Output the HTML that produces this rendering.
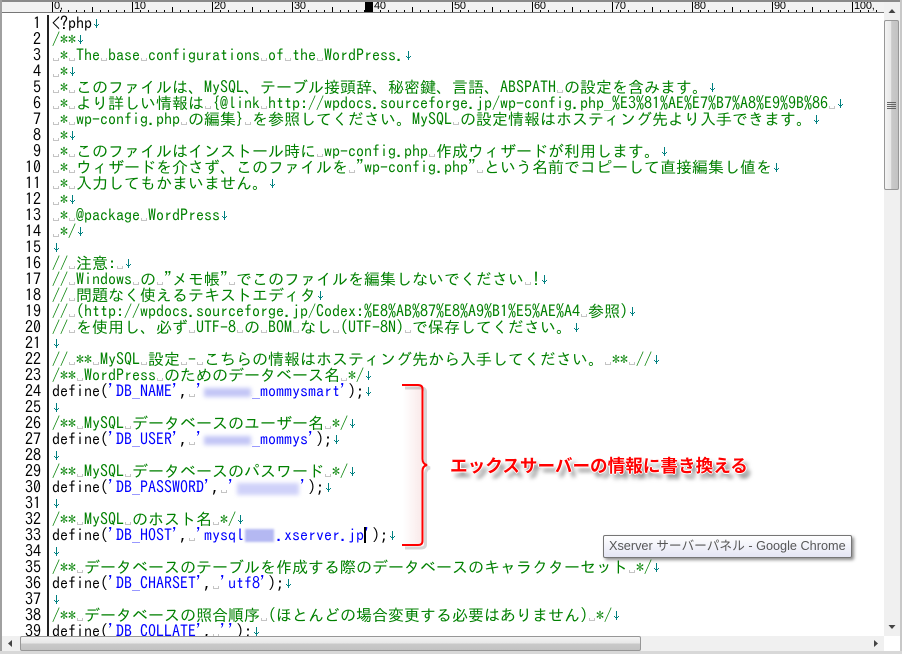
<!DOCTYPE html>
<html lang="ja"><head><meta charset="utf-8"><title>wp-config.php</title>
<style>
html,body{margin:0;padding:0;background:#fff}
#w{position:relative;width:902px;height:654px;overflow:hidden;background:#fff}
.l{position:absolute;left:52px;height:16px;line-height:16px;white-space:pre;font:16px/16px "IPAGothic","Noto Sans CJK JP",monospace;color:#000;-webkit-font-smoothing:none}
.n{position:absolute;left:0;width:41px;text-align:right;height:16px;font:16px/16px "IPAGothic",monospace;color:#000}
.g{color:#008000}
b{font-weight:normal;color:#0000ff}
s{display:inline-block;width:8px;height:16px;position:relative;text-decoration:none;vertical-align:top}
s:after{content:"";position:absolute;left:1px;top:11px;width:4px;height:2px;border:1px solid #c4c4c4;border-top:0}
u{display:inline-block;width:8px;height:16px;overflow:hidden;vertical-align:top;text-decoration:none;position:relative}
u:after{content:"";position:absolute;left:4px;top:4px;width:1px;height:9px;background:#008080}
u:before{content:"";position:absolute;left:2px;top:9px;width:5px;height:3px;background:linear-gradient(#008080,#008080) 0 0/1px 1px no-repeat,linear-gradient(#008080,#008080) 4px 0/1px 1px no-repeat,linear-gradient(#008080,#008080) 1px 1px/1px 1px no-repeat,linear-gradient(#008080,#008080) 3px 1px/1px 1px no-repeat}
.bl{position:absolute;background:#c3c6f6;filter:blur(2px)}
#gut{position:absolute;left:47px;top:15px;width:2px;height:621px;background:#222}
#top{position:absolute;left:0;top:0;width:902px;height:2px;background:#8a8a8a}
#left{position:absolute;left:0;top:0;width:2px;height:654px;background:#a0a0a0}
#rul{position:absolute;left:2px;top:2px;width:882px;height:10px;background:#f2f2f2}
#rl{position:absolute;left:0;top:12px;width:884px;height:1px;background:#777}
.rt{position:absolute;top:1px;font:11px/11px "Liberation Sans",sans-serif;color:#000;letter-spacing:-.2px}
#vs{position:absolute;left:884px;top:2px;width:16px;height:634px;background:#f0f0f0}
#th{position:absolute;left:884px;top:20px;width:15px;height:170px;box-sizing:border-box;border:1px solid #979797;border-radius:2px;background:linear-gradient(90deg,#f3f3f3,#e8e8e8 45%,#c9c9c9 50%,#c2c2c2)}
#hs{position:absolute;left:2px;top:636px;width:882px;height:15px;background:#f0f0f0}
#hth{position:absolute;left:20px;top:636px;width:621px;height:15px;box-sizing:border-box;border:1px solid #979797;border-radius:2px;background:linear-gradient(#f3f3f3,#e8e8e8 45%,#c9c9c9 55%,#c2c2c2)}
#bot{position:absolute;left:0;top:651px;width:902px;height:3px;background:#d8d8d8}
#rb{position:absolute;left:900px;top:0;width:2px;height:654px;background:#c8c8c8}
#tip{position:absolute;left:603px;top:535px;width:249px;height:23px;box-sizing:border-box;border:1px solid #767676;border-radius:2px;background:linear-gradient(#fff,#e4e5f4);box-shadow:2px 2px 3px rgba(0,0,0,.45);font:12.7px/21px "Liberation Sans","Noto Sans CJK JP",sans-serif;color:#575757;padding-left:5px;white-space:nowrap;z-index:5}
#note{position:absolute;left:450px;top:455px;font:bold 17.6px/22px "Noto Sans CJK JP",sans-serif;color:#f00;white-space:nowrap;text-shadow:-1px 0 0 #fff,1px 0 0 #fff,0 -1px 0 #fff,0 1px 0 #fff,4px 5px 4px rgba(0,0,0,.55)}
#caret{position:absolute;left:364px;top:527px;width:2px;height:16px;background:#000}
</style></head><body><div id="w">

<div class="n" style="top:15px">1</div><div class="l" style="top:15px">&lt;?php<u></u></div>
<div class="n" style="top:31px">2</div><div class="l g" style="top:31px">/**<u></u></div>
<div class="n" style="top:47px">3</div><div class="l g" style="top:47px"><s></s>*<s></s>The<s></s>base<s></s>configurations<s></s>of<s></s>the<s></s>WordPress.<u></u></div>
<div class="n" style="top:63px">4</div><div class="l g" style="top:63px"><s></s>*<u></u></div>
<div class="n" style="top:79px">5</div><div class="l g" style="top:79px"><s></s>*<s></s>このファイルは、MySQL、テーブル接頭辞、秘密鍵、言語、ABSPATH<s></s>の設定を含みます。<u></u></div>
<div class="n" style="top:95px">6</div><div class="l g" style="top:95px"><s></s>*<s></s>より詳しい情報は<s></s>{@link<s></s>http://wpdocs.sourceforge.jp/wp-config.php_%E3%81%AE%E7%B7%A8%E9%9B%86<s></s><u></u></div>
<div class="n" style="top:111px">7</div><div class="l g" style="top:111px"><s></s>*<s></s>wp-config.php<s></s>の編集}<s></s>を参照してください。MySQL<s></s>の設定情報はホスティング先より入手できます。<u></u></div>
<div class="n" style="top:127px">8</div><div class="l g" style="top:127px"><s></s>*<u></u></div>
<div class="n" style="top:143px">9</div><div class="l g" style="top:143px"><s></s>*<s></s>このファイルはインストール時に<s></s>wp-config.php<s></s>作成ウィザードが利用します。<u></u></div>
<div class="n" style="top:159px">10</div><div class="l g" style="top:159px"><s></s>*<s></s>ウィザードを介さず、このファイルを<s></s>"wp-config.php"<s></s>という名前でコピーして直接編集し値を<u></u></div>
<div class="n" style="top:175px">11</div><div class="l g" style="top:175px"><s></s>*<s></s>入力してもかまいません。<u></u></div>
<div class="n" style="top:191px">12</div><div class="l g" style="top:191px"><s></s>*<u></u></div>
<div class="n" style="top:207px">13</div><div class="l g" style="top:207px"><s></s>*<s></s>@package<s></s>WordPress<u></u></div>
<div class="n" style="top:223px">14</div><div class="l g" style="top:223px"><s></s>*/<u></u></div>
<div class="n" style="top:239px">15</div><div class="l" style="top:239px"><u></u></div>
<div class="n" style="top:255px">16</div><div class="l g" style="top:255px">//<s></s>注意:<s></s><u></u></div>
<div class="n" style="top:271px">17</div><div class="l g" style="top:271px">//<s></s>Windows<s></s>の<s></s>"メモ帳"<s></s>でこのファイルを編集しないでください<s></s>!<u></u></div>
<div class="n" style="top:287px">18</div><div class="l g" style="top:287px">//<s></s>問題なく使えるテキストエディタ<u></u></div>
<div class="n" style="top:303px">19</div><div class="l g" style="top:303px">//<s></s>(http://wpdocs.sourceforge.jp/Codex:%E8%AB%87%E8%A9%B1%E5%AE%A4<s></s>参照)<u></u></div>
<div class="n" style="top:319px">20</div><div class="l g" style="top:319px">//<s></s>を使用し、必ず<s></s>UTF-8<s></s>の<s></s>BOM<s></s>なし<s></s>(UTF-8N)<s></s>で保存してください。<u></u></div>
<div class="n" style="top:335px">21</div><div class="l" style="top:335px"><u></u></div>
<div class="n" style="top:351px">22</div><div class="l g" style="top:351px">//<s></s>**<s></s>MySQL<s></s>設定<s></s>-<s></s>こちらの情報はホスティング先から入手してください。<s></s>**<s></s>//<u></u></div>
<div class="n" style="top:367px">23</div><div class="l g" style="top:367px">/**<s></s>WordPress<s></s>のためのデータベース名<s></s>*/<u></u></div>
<div class="n" style="top:383px">24</div><div class="l" style="top:383px">define(<b>'DB_NAME'</b>,<s></s><b>'xxxxxx_mommysmart'</b>);<u></u></div>
<div class="n" style="top:399px">25</div><div class="l" style="top:399px"><u></u></div>
<div class="n" style="top:415px">26</div><div class="l g" style="top:415px">/**<s></s>MySQL<s></s>データベースのユーザー名<s></s>*/<u></u></div>
<div class="n" style="top:431px">27</div><div class="l" style="top:431px">define(<b>'DB_USER'</b>,<s></s><b>'xxxxxx_mommys'</b>);<u></u></div>
<div class="n" style="top:447px">28</div><div class="l" style="top:447px"><u></u></div>
<div class="n" style="top:463px">29</div><div class="l g" style="top:463px">/**<s></s>MySQL<s></s>データベースのパスワード<s></s>*/<u></u></div>
<div class="n" style="top:479px">30</div><div class="l" style="top:479px">define(<b>'DB_PASSWORD'</b>,<s></s><b>'xxxxxxxx'</b>);<u></u></div>
<div class="n" style="top:495px">31</div><div class="l" style="top:495px"><u></u></div>
<div class="n" style="top:511px">32</div><div class="l g" style="top:511px">/**<s></s>MySQL<s></s>のホスト名<s></s>*/<u></u></div>
<div class="n" style="top:527px">33</div><div class="l" style="top:527px">define(<b>'DB_HOST'</b>,<s></s><b>'mysqlxxxx.xserver.jp'</b>);<u></u></div>
<div class="n" style="top:543px">34</div><div class="l" style="top:543px"><u></u></div>
<div class="n" style="top:559px">35</div><div class="l g" style="top:559px">/**<s></s>データベースのテーブルを作成する際のデータベースのキャラクターセット<s></s>*/<u></u></div>
<div class="n" style="top:575px">36</div><div class="l" style="top:575px">define(<b>'DB_CHARSET'</b>,<s></s><b>'utf8'</b>);<u></u></div>
<div class="n" style="top:591px">37</div><div class="l" style="top:591px"><u></u></div>
<div class="n" style="top:607px">38</div><div class="l g" style="top:607px">/**<s></s>データベースの照合順序<s></s>(ほとんどの場合変更する必要はありません)<s></s>*/<u></u></div>
<div class="n" style="top:623px">39</div><div class="l" style="top:623px">define(<b>'DB_COLLATE'</b>,<s></s><b>''</b>);<u></u></div>

<div style="position:absolute;left:204px;top:384px;width:47px;height:15px;background:#fff"></div>
<div class="bl" style="left:204px;top:388px;width:47px;height:9px"></div>
<div style="position:absolute;left:204px;top:432px;width:47px;height:15px;background:#fff"></div>
<div class="bl" style="left:204px;top:436px;width:47px;height:9px"></div>
<div style="position:absolute;left:236px;top:480px;width:64px;height:15px;background:#fff"></div>
<div class="bl" style="left:237px;top:483px;width:62px;height:12px;background:#cfd1f9"></div>
<div style="position:absolute;left:244px;top:528px;width:32px;height:15px;background:#fff"></div>
<div class="bl" style="left:245px;top:529px;width:29px;height:13px;filter:blur(1px);background:#b4b8f2"></div>
<div id="caret"></div>

<div style="position:absolute;left:403px;top:385px;width:19px;height:160px;background:linear-gradient(90deg,#fff,#f9e9e9)"></div>
<svg style="position:absolute;left:400px;top:380px" width="40" height="175" viewBox="0 0 40 175">
<path d="M2 5H18Q22.500 5 22.500 9V79Q22.500 84 27 85Q22.500 86 22.500 91V161Q22.500 165 18 165H2" fill="none" stroke="#000" stroke-opacity=".16" stroke-width="3" transform="translate(3,3)"/>
<path d="M2 5H18Q22.500 5 22.500 9V79Q22.500 84 27 85Q22.500 86 22.500 91V161Q22.500 165 18 165H2" fill="none" stroke="#f00" stroke-width="2"/>
</svg>
<div id="note">エックスサーバーの情報に書き換える</div>
<div id="tip">Xserver サーバーパネル - Google Chrome</div>

<div id="gut"></div>
<div id="rul"></div>
<svg style="position:absolute;left:0;top:2px" width="884" height="10">
<defs><pattern id="p" x="52" y="0" width="80" height="10" patternUnits="userSpaceOnUse">
<path d="M.5 0V10M8.500 8V10M16.500 8V10M24.500 8V10M32.500 8V10M40.500 5V10M48.500 8V10M56.500 8V10M64.500 8V10M72.500 8V10" stroke="#000" fill="none"/></pattern></defs>
<rect x="52" width="832" height="10" fill="url(#p)"/><rect x="365" y="0" width="8" height="10" fill="#000"/>
</svg>
<div class="rt" style="left:54px">0,</div><div class="rt" style="left:134px">10</div><div class="rt" style="left:214px">20</div><div class="rt" style="left:294px">30</div><div class="rt" style="left:374px">40</div><div class="rt" style="left:454px">50</div><div class="rt" style="left:534px">60</div><div class="rt" style="left:614px">70</div><div class="rt" style="left:694px">80</div><div class="rt" style="left:774px">90</div><div class="rt" style="left:854px;width:30px;overflow:hidden">100,</div>
<div id="rl"></div><div id="top"></div>

<div id="vs"></div><div id="th"></div>
<svg style="position:absolute;left:884px;top:0" width="16" height="640">
<path d="M8 9L11.500 13H4.500Z" fill="#444"/><path d="M4.500 625H11.500L8 629Z" fill="#444"/>
<path d="M3 102.500H12M3 104.500H12M3 106.500H12M3 108.500H12" stroke="#666"/></svg>
<div id="hs"></div><div id="hth"></div>
<svg style="position:absolute;left:0;top:636px" width="884" height="15">
<path d="M8 7.500L12 4V11Z" fill="#444"/><path d="M878 7.500L874 4V11Z" fill="#444"/></svg>
<div id="left"></div><div id="rb"></div><div id="bot"></div>
</div></body></html>
